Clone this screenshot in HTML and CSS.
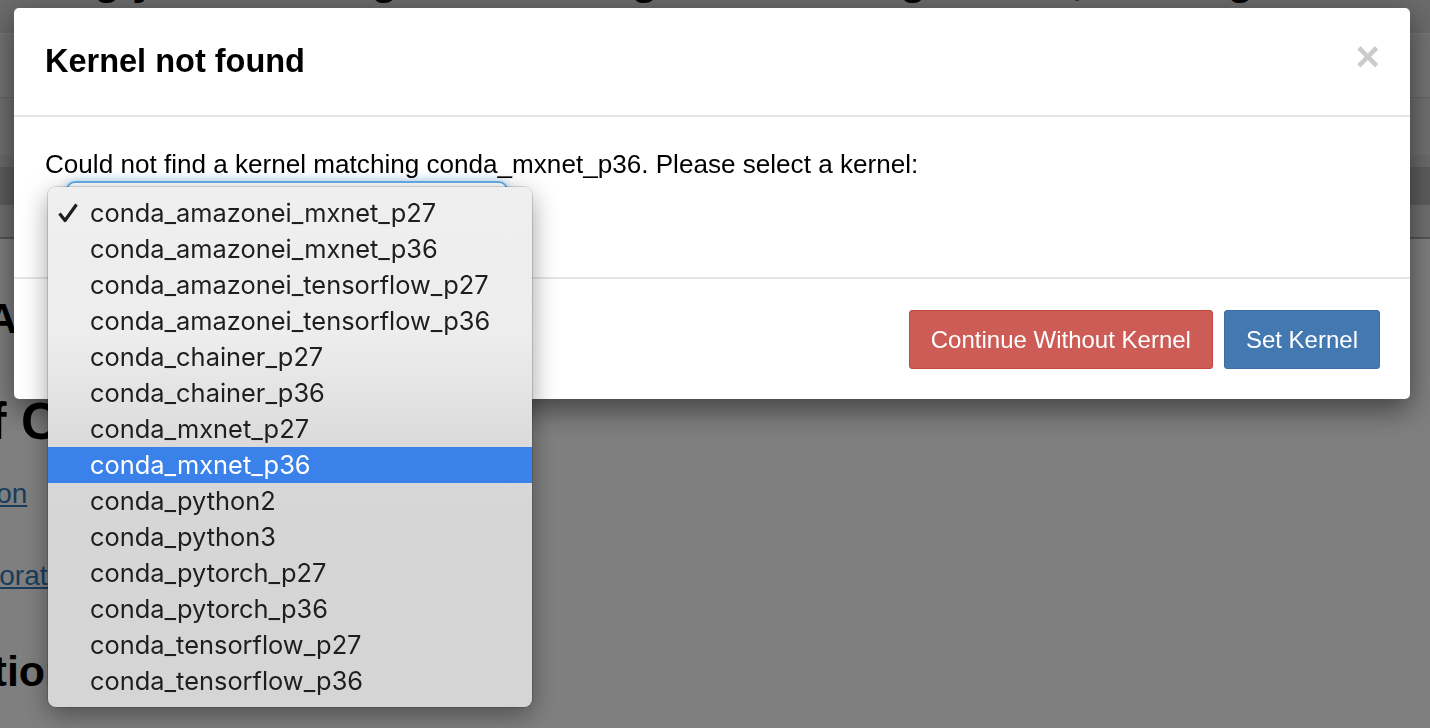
FILE: index.html
```html
<!DOCTYPE html>
<html lang="en">
<head>
<meta charset="utf-8">
<title>Kernel not found</title>
<link rel="stylesheet" href="styles.css">
</head>
<body>
<div class="page">
  <div class="nb-top"><div class="nb-top-text">Bring your own algorithm using Amazon SageMaker, training it with the high-level Python SDK and deploying</div></div>
  <div class="nb-menubar"></div>
  <div class="nb-toolbar"></div>
  <div class="nb-kernelbar"></div>
  <div class="nb-cellbar"></div>
  <div class="nb-strip"></div>
  <main class="notebook">
    <h2 class="nb-h2 nb-h2--first">Train an Algorithm</h2>
    <h1 class="nb-h1">Table of Contents</h1>
    <ul class="toc">
      <li><a href="#intro">Introduction</a></li>
      <li><a href="#explore">Data exploration</a></li>
    </ul>
    <h2 class="nb-h2 nb-h2--last">Optimization</h2>
  </main>
</div>

<div class="backdrop"></div>

<div class="modal">
  <div class="modal-header">
    <h4 class="modal-title">Kernel not found</h4>
    <button class="close" type="button">×</button>
  </div>
  <div class="modal-body">
    <p class="modal-text">Could not find a kernel matching conda_mxnet_p36. Please select a kernel:</p>
    <div class="kernel-select"></div>
  </div>
  <div class="modal-footer">
    <button class="btn btn-danger" type="button">Continue Without Kernel</button>
    <button class="btn btn-primary" type="button">Set Kernel</button>
  </div>
</div>

<div class="select-popup">
  <div class="opt"><span class="check-slot"><svg class="check" viewBox="0 0 20 20" width="20" height="20"><path d="M1.5 10.5 L7 17.5 L18.5 1.5" fill="none" stroke="#1e1e1e" stroke-width="3.2" stroke-linejoin="round"/></svg></span><span class="opt-label">conda_amazonei_mxnet_p27</span></div>
  <div class="opt"><span class="check-slot"></span><span class="opt-label">conda_amazonei_mxnet_p36</span></div>
  <div class="opt"><span class="check-slot"></span><span class="opt-label">conda_amazonei_tensorflow_p27</span></div>
  <div class="opt"><span class="check-slot"></span><span class="opt-label">conda_amazonei_tensorflow_p36</span></div>
  <div class="opt"><span class="check-slot"></span><span class="opt-label">conda_chainer_p27</span></div>
  <div class="opt"><span class="check-slot"></span><span class="opt-label">conda_chainer_p36</span></div>
  <div class="opt"><span class="check-slot"></span><span class="opt-label">conda_mxnet_p27</span></div>
  <div class="opt opt--active"><span class="check-slot"></span><span class="opt-label">conda_mxnet_p36</span></div>
  <div class="opt"><span class="check-slot"></span><span class="opt-label">conda_python2</span></div>
  <div class="opt"><span class="check-slot"></span><span class="opt-label">conda_python3</span></div>
  <div class="opt"><span class="check-slot"></span><span class="opt-label">conda_pytorch_p27</span></div>
  <div class="opt"><span class="check-slot"></span><span class="opt-label">conda_pytorch_p36</span></div>
  <div class="opt"><span class="check-slot"></span><span class="opt-label">conda_tensorflow_p27</span></div>
  <div class="opt"><span class="check-slot"></span><span class="opt-label">conda_tensorflow_p36</span></div>
</div>
</body>
</html>
```

FILE: styles.css
```css
html, body {
  margin: 0;
  padding: 0;
}
body {
  width: 1430px;
  height: 728px;
  overflow: hidden;
  background: #ffffff;
  font-family: "Liberation Sans", Arial, sans-serif;
  color: #000;
}

/* ---------- background notebook page ---------- */
.page {
  width: 1430px;
  height: 728px;
  overflow: hidden;
}
.nb-top {
  height: 33px;
  background: #d6d6d6;
  overflow: hidden;
}
.nb-top-text {
  margin: -46px 0 0 8px;
  font-size: 43px;
  line-height: 50px;
  font-weight: 700;
  white-space: nowrap;
}
.nb-menubar {
  height: 63px;
  border-top: 1px solid #f0f0f0;
  background: #e6e6e6;
}
.nb-toolbar {
  height: 57px;
  border-top: 1px solid #cdcdcd;
  background: #e0e0e0;
}
.nb-kernelbar {
  height: 12px;
  background: #d6d6d6;
}
.nb-cellbar {
  height: 38px;
  background: #bababa;
}
.nb-strip {
  height: 32px;
  background: #e0e0e0;
  border-bottom: 2px solid #a8a8a8;
}
.notebook {
  margin-left: -189px;
  width: 249px;
  overflow: hidden;
  white-space: nowrap;
}
.nb-h2 {
  margin: 52px 0 0;
  font-size: 43px;
  line-height: 50px;
  font-weight: 700;
}
.nb-h2--first {
  margin-top: 54px;
}
.nb-h1 {
  margin: 48px 0 0;
  font-size: 52px;
  line-height: 60px;
  font-weight: 700;
}
.toc {
  list-style: none;
  margin: 25px 0 0;
  padding-left: 70px;
  font-size: 28px;
  line-height: 36px;
}
.toc li + li {
  margin-top: 46px;
}
.toc a {
  color: #337ab7;
  text-decoration: underline;
}

.backdrop {
  position: fixed;
  inset: 0;
  background: rgba(0, 0, 0, 0.5);
}

/* ---------- modal ---------- */
.modal {
  position: fixed;
  left: 14px;
  top: 8px;
  width: 1396px;
  background: #fff;
  border-radius: 5px;
  box-shadow: 0 10px 30px rgba(0, 0, 0, 0.5);
}
.modal-header {
  display: flex;
  justify-content: space-between;
  align-items: flex-start;
  padding: 30px 30px 30px 31px;
  border-bottom: 2px solid #e5e5e5;
}
.modal-title {
  margin: 0;
  font-size: 32.5px;
  line-height: 47px;
  font-weight: 700;
  color: #000;
}
.close {
  margin: -2px 0 0;
  padding: 0;
  border: 0;
  background: none;
  font-family: "Liberation Sans", Arial, sans-serif;
  font-size: 42px;
  line-height: 42px;
  font-weight: 700;
  color: #000;
  opacity: 0.2;
}
.modal-body {
  padding: 30px 31px 32px;
}
.modal-text {
  margin: 0;
  font-size: 26.1px;
  line-height: 34px;
}
.kernel-select {
  margin-left: 21px;
  width: 442px;
  height: 64px;
  box-sizing: border-box;
  border: 2px solid #66afe9;
  border-radius: 9px;
  box-shadow: 0 0 10px rgba(102, 175, 233, 0.6);
}
.modal-footer {
  display: flex;
  justify-content: flex-end;
  gap: 11px;
  padding: 31px 30px 30px;
  border-top: 2px solid #e5e5e5;
}
.btn {
  font-family: "Liberation Sans", Arial, sans-serif;
  font-size: 24px;
  line-height: 33px;
  padding: 12px 21px;
  border: 1px solid transparent;
  border-radius: 3px;
  color: #fff;
}
.btn-danger {
  background: #cc5c55;
  border-color: #c4463f;
}
.btn-primary {
  background: #4378b1;
  border-color: #3b6ea6;
}

/* ---------- native select popup (macOS menu) ---------- */
.select-popup {
  position: fixed;
  left: 48px;
  top: 187px;
  width: 484px;
  height: 520px;
  box-sizing: border-box;
  padding: 8px 0;
  border-radius: 8px;
  background: linear-gradient(to bottom, #efefef 0, #ededed 150px, #dadada 262px, #d6d6d6 320px, #d5d5d5 100%);
  box-shadow: 0 0 0 1px rgba(0, 0, 0, 0.14), 0 8px 26px rgba(0, 0, 0, 0.38);
  font-family: Inter, "Noto Sans", sans-serif;
  font-size: 25.4px;
  color: #1e1e1e;
}
.opt {
  display: flex;
  align-items: center;
  height: 36px;
  line-height: 36px;
  white-space: nowrap;
}
.opt--active {
  background: #3a82e9;
  color: #fff;
}
.check-slot {
  display: flex;
  align-items: center;
  width: 32px;
  height: 36px;
  padding-left: 10px;
}
.check {
  display: block;
}
```
